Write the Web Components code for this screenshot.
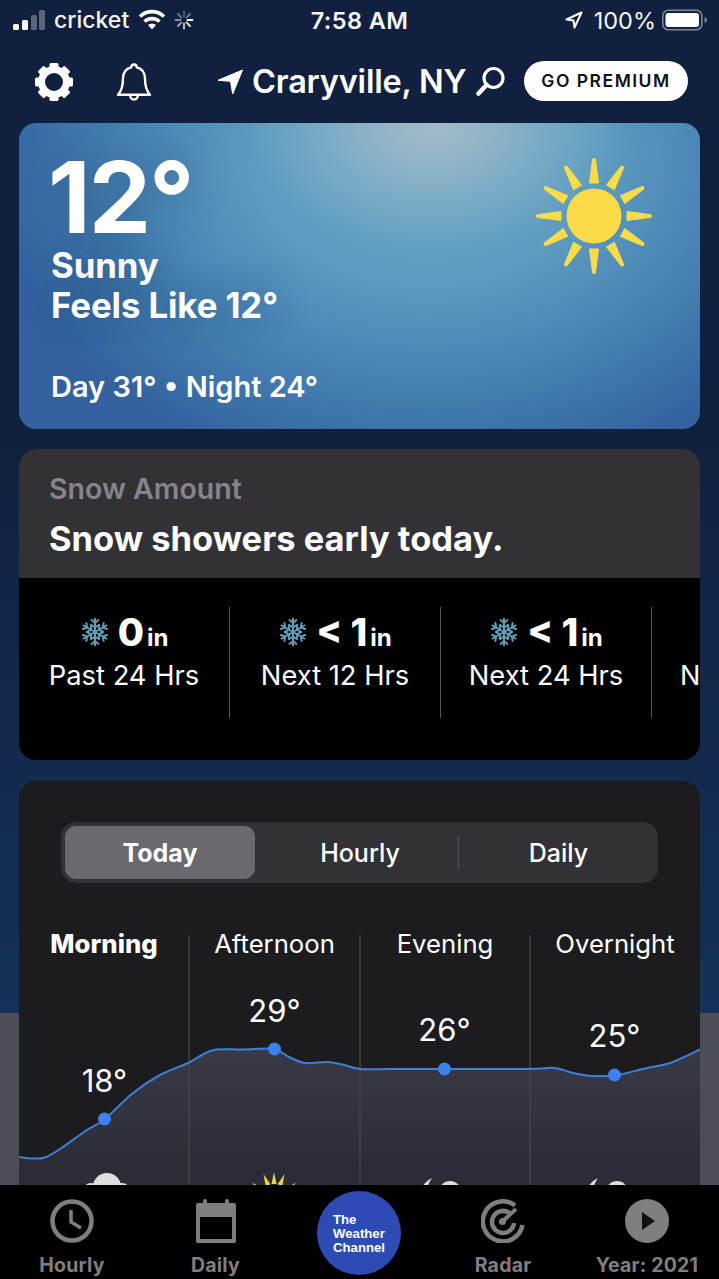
<!DOCTYPE html>
<html>
<head>
<meta charset="utf-8">
<title>Weather</title>
<style>
    html, body { margin: 0; padding: 0; background: #12203f; }
</style>
</head>
<body>
<weather-app>
    <status-bar></status-bar>
    <top-nav city="Craryville, NY"></top-nav>
    <hero-card></hero-card>
    <snow-card></snow-card>
    <forecast-card></forecast-card>
    <tab-bar slot="tabs"></tab-bar>
</weather-app>

<script>
const FONT = `Inter, "Noto Sans", "Liberation Sans", sans-serif`;

class WeatherApp extends HTMLElement {
    constructor() {
        super();
        this.attachShadow({ mode: 'open' });
        this.shadowRoot.innerHTML = `
            <style>
                :host {
                    display: block;
                    position: relative;
                    width: 719px;
                    height: 1279px;
                    overflow: hidden;
                    font-family: ${FONT};
                    color: #fff;
                    background: linear-gradient(#12203f 0, #12203f 440px, #143259 1013px, #4b4e58 1013px, #4b4e58 100%);
                }
                .tabs { position: absolute; left: 0; right: 0; bottom: 0; }
            </style>
            <slot></slot>
            <div class="tabs"><slot name="tabs"></slot></div>
        `;
    }
}

class StatusBar extends HTMLElement {
    constructor() {
        super();
        this.attachShadow({ mode: 'open' });
        const spokes = [0, 45, 90, 135, 180, 225, 270, 315].map((a, i) =>
            `<line x1="10" y1="1.5" x2="10" y2="6.5" transform="rotate(${a} 10 10)" stroke="#fff" stroke-width="1.8" stroke-linecap="round" opacity="${[.3, .4, 1, .9, .8, .6, .5, .4][i]}"/>`).join('');
        this.shadowRoot.innerHTML = `
            <style>
                :host {
                    display: grid;
                    grid-template-columns: 1fr auto 1fr;
                    align-items: center;
                    height: 40px;
                    font-size: 23px;
                    color: #f4f5f7;
                }
                .left, .right { display: flex; align-items: center; }
                .left { padding-left: 13px; }
                .right { justify-content: flex-end; padding-right: 11px; }
                .carrier { margin: 0 9px; font-weight: 500; }
                .time { font-weight: 600; font-size: 23.5px; letter-spacing: .4px; }
                .pct { margin: 0 6px 0 11px; font-size: 23.5px; }
                svg { display: block; }
            </style>
            <div class="left">
                <svg width="32" height="22" viewBox="0 0 32 22">
                    <rect x="0" y="15" width="6" height="6" rx="1.5" fill="#fff"/>
                    <rect x="9" y="11" width="6" height="10" rx="1.5" fill="#fff"/>
                    <rect x="18" y="6" width="6" height="15" rx="1.5" fill="#5d6679"/>
                    <rect x="26" y="1" width="6" height="20" rx="1.5" fill="#5d6679"/>
                </svg>
                <span class="carrier">cricket</span>
                <svg width="28" height="22" viewBox="0 0 28 22" fill="none" stroke="#fff" stroke-width="3.6">
                    <path d="M2 7.5C9 1 19 1 26 7.5"/>
                    <path d="M6.5 12.5C11 8.6 17 8.6 21.5 12.5"/>
                    <path d="M14 20.5l-4-4.5C12 14.4 16 14.4 18 16z" fill="#fff" stroke="none"/>
                </svg>
                <svg style="margin-left:8px" width="20" height="20" viewBox="0 0 20 20">${spokes}</svg>
            </div>
            <div class="time">7:58 AM</div>
            <div class="right">
                <svg width="18" height="18" viewBox="0 0 18 18" fill="none" stroke="#fff" stroke-width="2" stroke-linejoin="round"><path d="M16.5 1.5L1.5 8.5l7 1 1 7z"/></svg>
                <span class="pct">100%</span>
                <svg width="46" height="22" viewBox="0 0 46 22">
                    <rect x=".8" y="1.3" width="39" height="19.4" rx="5.5" fill="none" stroke="#7b8396" stroke-width="1.6"/>
                    <rect x="3.5" y="4" width="33.5" height="14" rx="3" fill="#fff"/>
                    <path d="M42.5 8v6c1.5-.5 2.5-1.6 2.5-3s-1-2.5-2.5-3z" fill="#7b8396"/>
                </svg>
            </div>
        `;
    }
}

class TopNav extends HTMLElement {
    constructor() {
        super();
        this.attachShadow({ mode: 'open' });
    }
    connectedCallback() {
        const teeth = [0, 45, 90, 135, 180, 225, 270, 315].map(a =>
            `<rect x="15.5" y="1" width="9" height="9" rx="1.5" fill="#fff" transform="rotate(${a} 20 20)"/>`).join('');
        this.shadowRoot.innerHTML = `
            <style>
                :host {
                    display: flex;
                    align-items: center;
                    height: 83px;
                    box-sizing: border-box;
                    padding: 0 31px 0 34px;
                    color: #fff;
                }
                svg { display: block; flex: none; }
                .bell { margin-left: 41px; }
                .arrow { margin-left: 64px; }
                .city { margin-left: 9px; font-size: 32.5px; font-weight: 600; letter-spacing: -.2px; white-space: nowrap; }
                .search { margin-left: 9px; }
                .pill {
                    margin: -2px 0 0 auto;
                    height: 40px;
                    width: 164px;
                    border-radius: 20px;
                    background: #fff;
                    color: #0e1116;
                    font-size: 17.5px;
                    font-weight: 600;
                    letter-spacing: 1.5px;
                    display: flex;
                    align-items: center;
                    justify-content: center;
                }
            </style>
            <svg width="40" height="40" viewBox="0 0 40 40">
                ${teeth}
                <circle cx="20" cy="20" r="12.5" fill="none" stroke="#fff" stroke-width="7"/>
            </svg>
            <svg class="bell" width="38" height="42" viewBox="0 0 38 42" fill="none" stroke="#fff" stroke-width="2.4" stroke-linejoin="round">
                <path d="M19 3.5c1.7 0 2.7 1 2.7 2.8 5.3 1.3 8.3 5.3 8.3 11.2 0 8 1.5 12.5 5 16.3H3c3.5-3.8 5-8.300 5-16.300 0-5.900 3-9.900 8.300-11.200 0-1.800 1-2.800 2.700-2.800z"/>
                <path d="M15 34c.3 3 2 4.500 4 4.500s3.700-1.500 4-4.500"/>
            </svg>
            <svg class="arrow" width="26" height="26" viewBox="0 0 26 26"><path d="M25.5 1L1 11.3l12.5 1 2.2 12.7z" fill="#fff" stroke="#fff" stroke-linejoin="round"/></svg>
            <span class="city">${this.getAttribute('city')}</span>
            <svg class="search" width="30" height="32" viewBox="0 0 30 32" fill="none" stroke="#fff">
                <circle cx="17.5" cy="12" r="9.5" stroke-width="3.2"/>
                <path d="M10.5 19L2.5 27.5" stroke-width="4.5" stroke-linecap="round"/>
            </svg>
            <div class="pill">GO PREMIUM</div>
        `;
    }
}

class HeroCard extends HTMLElement {
    constructor() {
        super();
        this.attachShadow({ mode: 'open' });
        const rays = Array.from({ length: 12 }, (_, i) =>
            `<path d="M53.5 25L56.5 2a1.5 1.5 0 0 1 3 0L62.5 25z" transform="rotate(${i * 30} 58 58)" fill="#fbdc48" stroke="#fbdc48" stroke-linejoin="round"/>`).join('');
        this.shadowRoot.innerHTML = `
            <style>
                :host {
                    display: block;
                    position: relative;
                    margin: 0 19px;
                    height: 306px;
                    box-sizing: border-box;
                    padding: 32px 32px 0;
                    border-radius: 17px;
                    overflow: hidden;
                    background:
                        radial-gradient(ellipse 190px 130px at 61% 0, rgba(176,190,200,.85) 0, rgba(160,190,205,.35) 60%, rgba(160,190,205,0) 100%),
                        radial-gradient(ellipse 440px 330px at 60% 10%, #6ea7c6 0, #5c9abf 40%, #457fb1 72%, #33629f 100%);
                    background-color: #33629f;
                }
                .temp { font-size: 99px; line-height: 84px; font-weight: 700; letter-spacing: -2px; margin-left: -3px; text-shadow: 0 0 36px rgba(40,75,125,.5); }
                .sun { position: absolute; right: 48px; top: 35px; }
                .cond { margin-top: 6px; font-size: 34.8px; line-height: 40px; font-weight: 700; white-space: nowrap; letter-spacing: -.1px; text-shadow: 0 0 30px rgba(40,75,125,.5); }
                .range { position: absolute; left: 32px; top: 247px; font-size: 29px; line-height: 34px; font-weight: 600; white-space: nowrap; }
            </style>
            <div class="temp">12°</div>
            <div class="cond">Sunny<br>Feels Like 12°</div>
            <div class="range">Day 31° • Night 24°</div>
            <svg class="sun" width="116" height="116" viewBox="0 0 116 116">
                ${rays}
                <circle cx="58" cy="58" r="27.5" fill="#fbdc48"/>
            </svg>
        `;
    }
}

class SnowFlake extends HTMLElement {
    constructor() {
        super();
        this.attachShadow({ mode: 'open' });
        const arms = [0, 60, 120, 180, 240, 300].map(a =>
            `<g transform="rotate(${a} 15 15)"><path d="M15 15V1M15 6l-4-3.5M15 6l4-3.5M15 10.5l-4.5-3M15 10.5l4.5-3"/></g>`).join('');
        this.shadowRoot.innerHTML = `
            <style>
                :host { display: inline-block; width: 30px; height: 30px; }
                svg { display: block; }
            </style>
            <svg width="30" height="30" viewBox="0 0 30 30" fill="none" stroke="#5f9cb8" stroke-width="2">${arms}</svg>
        `;
    }
}

class SnowStat extends HTMLElement {
    constructor() {
        super();
        this.attachShadow({ mode: 'open' });
    }
    connectedCallback() {
        this.shadowRoot.innerHTML = `
            <style>
                :host {
                    display: block;
                    flex: none;
                    width: 211px;
                    height: 111px;
                    box-sizing: border-box;
                    border-right: 1px solid #55565b;
                    text-align: center;
                    color: #fff;
                }
                .val { display: flex; justify-content: center; align-items: baseline; height: 50px; white-space: nowrap; }
                snow-flake { align-self: center; margin-right: 8px; }
                b { font-size: 38px; font-weight: 800; line-height: 50px; }
                i { font-style: normal; font-size: 24px; font-weight: 700; margin-left: 3px; }
                .lbl { font-size: 27.3px; line-height: 32px; margin-top: 3px; white-space: nowrap; }
            </style>
            <div class="val"><snow-flake></snow-flake><b>${this.getAttribute('value')}</b><i>in</i></div>
            <div class="lbl">${this.getAttribute('label')}</div>
        `;
    }
}

class SnowCard extends HTMLElement {
    constructor() {
        super();
        this.attachShadow({ mode: 'open' });
        this.shadowRoot.innerHTML = `
            <style>
                :host {
                    display: block;
                    margin: 20px 19px 0;
                    height: 311px;
                    border-radius: 17px;
                    overflow: hidden;
                    background: #000;
                }
                .head { height: 129px; box-sizing: border-box; padding: 22px 30px 0; background: #323136; }
                .sub { font-size: 28.5px; line-height: 36px; font-weight: 600; color: #85858b; white-space: nowrap; }
                .title { font-size: 34.5px; line-height: 43px; margin-top: 10px; font-weight: 700; color: #fff; white-space: nowrap; }
                .stats { display: flex; padding-top: 29px; }
                .peek { padding: 53px 0 0 28px; font-size: 27px; line-height: 32px; color: #fff; }
            </style>
            <div class="head">
                <div class="sub">Snow Amount</div>
                <div class="title">Snow showers early today.</div>
            </div>
            <div class="stats">
                <snow-stat value="0" label="Past 24 Hrs"></snow-stat>
                <snow-stat value="&lt; 1" label="Next 12 Hrs"></snow-stat>
                <snow-stat value="&lt; 1" label="Next 24 Hrs"></snow-stat>
                <div class="peek">N</div>
            </div>
        `;
    }
}

class SegControl extends HTMLElement {
    constructor() {
        super();
        this.attachShadow({ mode: 'open' });
        this.shadowRoot.innerHTML = `
            <style>
                :host {
                    display: grid;
                    grid-template-columns: 190px 204px 195px;
                    width: 597px;
                    height: 61px;
                    box-sizing: border-box;
                    padding: 4px;
                    border-radius: 15px;
                    background: #323136;
                    font-size: 25px;
                    font-weight: 500;
                    color: #fff;
                }
                div { display: flex; align-items: center; justify-content: center; }
                .on { background: #69696f; border-radius: 11px; font-weight: 700; }
                .mid { position: relative; padding-left: 6px; }
                .mid::after { content: ""; position: absolute; right: 0; top: 10px; bottom: 10px; width: 1px; background: #54545a; }
                .last { padding-left: 4px; }
            </style>
            <div class="on">Today</div>
            <div class="mid">Hourly</div>
            <div class="last">Daily</div>
        `;
    }
}

// smooth line through the points, as cubic segments
function smoothPath(pts) {
    let d = `M${pts[0][0]} ${pts[0][1]}`;
    for (let i = 0; i < pts.length - 1; i++) {
        const p0 = pts[i - 1] || pts[i];
        const p1 = pts[i];
        const p2 = pts[i + 1];
        const p3 = pts[i + 2] || p2;
        const c1 = [p1[0] + (p2[0] - p0[0]) / 6, p1[1] + (p2[1] - p0[1]) / 6];
        const c2 = [p2[0] - (p3[0] - p1[0]) / 6, p2[1] - (p3[1] - p1[1]) / 6];
        d += `C${c1[0].toFixed(1)} ${c1[1].toFixed(1)} ${c2[0].toFixed(1)} ${c2[1].toFixed(1)} ${p2[0]} ${p2[1]}`;
    }
    return d;
}

class ForecastChart extends HTMLElement {
    constructor() {
        super();
        this.attachShadow({ mode: 'open' });
        const Y = 925;
        const X = 19;
        const curve = [[19, 1157], [33, 1158.5], [45, 1157.5], [60, 1149], [87, 1130], [105, 1119], [133, 1093], [160, 1075], [188, 1063],
            [202, 1055], [216, 1049.5], [243, 1049.5], [274, 1049], [289, 1057], [305, 1063], [328, 1062], [344, 1065], [360, 1069],
            [390, 1069], [444, 1069], [527, 1069], [555, 1068], [573, 1073], [592, 1076], [615, 1075.5], [647, 1068], [670, 1063], [700, 1049.5]]
            .map(p => [p[0] - X, p[1] - Y]);
        const line = smoothPath(curve);
        const points = [[104, 1119, '18°', 1081], [274, 1049, '29°', 1011], [444, 1069, '26°', 1030], [614, 1075, '25°', 1036]];
        const dots = points.map(p => `<circle cx="${p[0] - X + .5}" cy="${p[1] - Y}" r="6.5" fill="#3b82f0"/>`).join('');
        const temps = points.map(p => `<text x="${p[0] - X + .5}" y="${p[3] - Y + 11}" text-anchor="middle" font-size="31" fill="#fff">${p[2]}</text>`).join('');
        const rays = [-52, -22, 0, 22, 52].map(a =>
            `<path d="M252.5 259L255 247L257.5 259z" transform="rotate(${a} 255 275)" fill="#e9d54c"/>`).join('');
        this.shadowRoot.innerHTML = `
            <style>
                :host {
                    display: block;
                    position: relative;
                    height: 360px;
                    font-size: 25.7px;
                    color: #fff;
                }
                .labels { display: grid; grid-template-columns: 170px 171px 170px 170px; position: relative; padding-top: 3px; }
                .labels div { text-align: center; line-height: 32px; white-space: nowrap; }
                .labels .on { font-weight: 800; }
                svg { position: absolute; left: 0; top: 0; display: block; }
                text { font-family: ${FONT}; }
            </style>
            <svg width="681" height="360" viewBox="0 0 681 360">
                <defs>
                    <linearGradient id="area" x1="0" y1="0" x2="0" y2="1">
                        <stop offset="0" stop-color="#393a46"/>
                        <stop offset=".5" stop-color="#2b2d36"/>
                        <stop offset="1" stop-color="#2b2d36"/>
                    </linearGradient>
                </defs>
                <path d="${line}L681 360L0 360z" fill="url(#area)"/>
                <path d="M170 10V360M341 10V360M511 10V360" stroke="#48494f" stroke-width="1.2"/>
                <path d="${line}" fill="none" stroke="#3f7fd9" stroke-width="2"/>
                ${dots}
                ${temps}
                <g fill="#dedede">
                    <circle cx="88" cy="262" r="14"/><circle cx="72" cy="266" r="8"/><circle cx="103" cy="266" r="8"/><rect x="64" y="262" width="48" height="14" rx="7"/>
                </g>
                ${rays}
                <g fill="#dedede">
                    <path d="M413 253C407 256 403 260 401 268L408 268C408 262 410 257 413 253z"/><circle cx="431" cy="267" r="11"/>
                    <path d="M579 253C573 256 569 260 567 268L574 268C574 262 576 257 579 253z"/><circle cx="598" cy="267" r="11"/>
                </g>
            </svg>
            <div class="labels">
                <div class="on">Morning</div><div>Afternoon</div><div>Evening</div><div>Overnight</div>
            </div>
        `;
    }
}

class ForecastCard extends HTMLElement {
    constructor() {
        super();
        this.attachShadow({ mode: 'open' });
        this.shadowRoot.innerHTML = `
            <style>
                :host {
                    display: block;
                    margin: 21px 19px 0;
                    height: 500px;
                    border-radius: 17px;
                    overflow: hidden;
                    background: #1c1c1e;
                    box-sizing: border-box;
                    padding-top: 41px;
                }
                seg-control { margin: 0 0 42px 42px; }
            </style>
            <seg-control></seg-control>
            <forecast-chart></forecast-chart>
        `;
    }
}

class TabItem extends HTMLElement {
    constructor() {
        super();
        this.attachShadow({ mode: 'open' });
    }
    connectedCallback() {
        this.shadowRoot.innerHTML = `
            <style>
                :host { display: flex; flex-direction: column; align-items: center; color: #7f7f7f; padding-top: 14px; }
                .icon { height: 44px; }
                .lbl { margin-top: 9px; font-size: 19.5px; line-height: 26px; font-weight: 700; letter-spacing: .2px; white-space: nowrap; }
            </style>
            <div class="icon"><slot></slot></div>
            <div class="lbl">${this.getAttribute('label')}</div>
        `;
    }
}

class TabBar extends HTMLElement {
    constructor() {
        super();
        this.attachShadow({ mode: 'open' });
        this.shadowRoot.innerHTML = `
            <style>
                :host {
                    display: grid;
                    grid-template-columns: 144px 143px 144px 144px 144px;
                    height: 94px;
                    background: #000;
                }
                svg { display: block; }
                .logo { display: flex; justify-content: center; padding-top: 6px; }
                .badge {
                    width: 84px;
                    height: 84px;
                    box-sizing: border-box;
                    border-radius: 50%;
                    background: #2c4bb4;
                    color: #fff;
                    font-family: "Liberation Sans", sans-serif;
                    font-size: 13.2px;
                    line-height: 14px;
                    font-weight: 700;
                    padding: 22px 0 0 16px;
                }
            </style>
            <tab-item label="Hourly">
                <svg width="44" height="44" viewBox="0 0 44 44" fill="none" stroke="#7f7f7f">
                    <circle cx="22" cy="22" r="19.5" stroke-width="4.5"/>
                    <path d="M21 11v12l10 6" stroke-width="3.5"/>
                </svg>
            </tab-item>
            <tab-item label="Daily">
                <svg width="44" height="44" viewBox="0 0 44 44" fill="#7f7f7f">
                    <rect x="9" y="0" width="4" height="8" rx="2"/><rect x="31" y="0" width="4" height="8" rx="2"/>
                    <path d="M2 6a2 2 0 0 1 2-2h36a2 2 0 0 1 2 2v36a2 2 0 0 1-2 2H4a2 2 0 0 1-2-2zM6 18v22h32V18z" fill-rule="evenodd"/>
                </svg>
            </tab-item>
            <div class="logo"><div class="badge">The<br>Weather<br>Channel</div></div>
            <tab-item label="Radar">
                <svg width="44" height="44" viewBox="0 0 44 44" fill="none" stroke="#7f7f7f" stroke-width="4.5">
                    <path d="M34 6.5A20 20 0 1 0 41.5 26"/>
                    <path d="M28.5 14A11 11 0 1 0 33 24"/>
                    <circle cx="21.5" cy="22.5" r="3.5" fill="#7f7f7f" stroke="none"/>
                    <path d="M22 22L35 10" stroke-width="4"/>
                </svg>
            </tab-item>
            <tab-item label="Year: 2021">
                <svg width="44" height="44" viewBox="0 0 44 44">
                    <circle cx="22" cy="22" r="22" fill="#7f7f7f"/>
                    <path d="M17 13l13 9-13 9z" fill="#111"/>
                </svg>
            </tab-item>
        `;
    }
}

customElements.define('weather-app', WeatherApp);
customElements.define('status-bar', StatusBar);
customElements.define('top-nav', TopNav);
customElements.define('hero-card', HeroCard);
customElements.define('snow-flake', SnowFlake);
customElements.define('snow-stat', SnowStat);
customElements.define('snow-card', SnowCard);
customElements.define('seg-control', SegControl);
customElements.define('forecast-chart', ForecastChart);
customElements.define('forecast-card', ForecastCard);
customElements.define('tab-item', TabItem);
customElements.define('tab-bar', TabBar);
</script>
</body>
</html>
